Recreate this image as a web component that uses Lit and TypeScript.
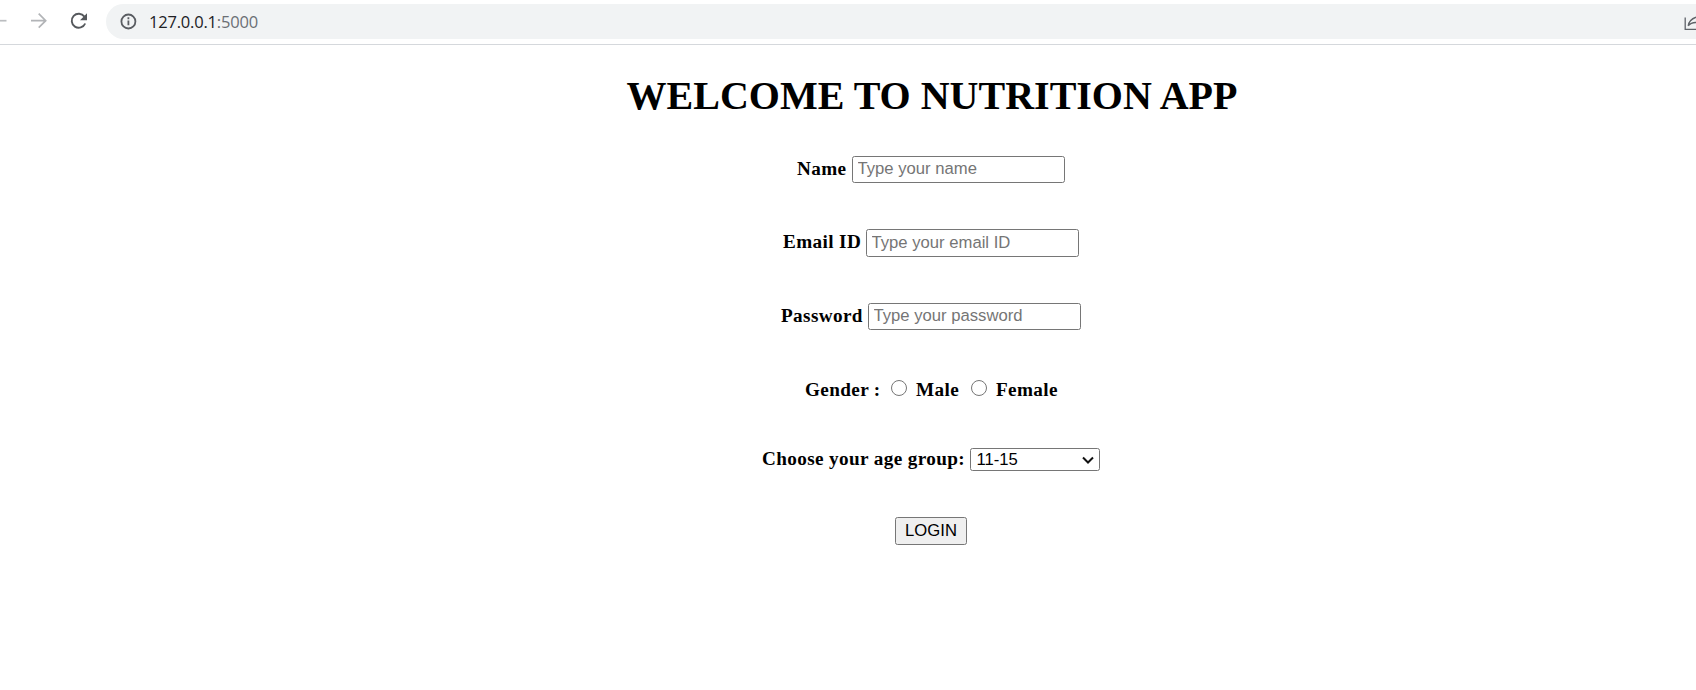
import { LitElement, html, css } from "lit";
import { customElement } from "lit/decorators.js";

@customElement("browser-bar")
class BrowserBar extends LitElement {
  static styles = css`
    :host { display: block; height: 44px; border-bottom: 1px solid #d5d8dc; background: #fff; box-sizing: content-box; }
    .bar { display: flex; height: 44px; }
    .nav { width: 106px; height: 44px; flex: none; display: block; }
    .address { flex: 1; display: flex; align-items: center; height: 35px; margin-top: 4px; background: #f1f3f4; border-radius: 18px 0 0 18px; overflow: hidden; }
    .info { width: 43px; height: 35px; flex: none; }
    .url { flex: 1; font: 16.5px/35px "Open Sans", sans-serif; letter-spacing: -0.2px; color: #202124; white-space: nowrap; }
    .port { color: #6b6f74; }
    .share { width: 12px; height: 35px; flex: none; }
  `;
  render() {
    return html`<div class="bar">
      <svg class="nav" viewBox="0 0 106 44" fill="none" stroke-width="1.7">
        <path d="M0 20.7H6.5" stroke="#bbbdc0" />
        <path d="M31 20.7H45.5M38.7 13.7L45.7 20.7L38.7 27.7" stroke="#b2b4b7" />
        <path d="M84.4 16.6A7 7 0 1 0 85.2 23.5" stroke="#55585c" stroke-width="1.9" />
        <path d="M87 13.2V20.2H80Z" fill="#55585c" />
      </svg>
      <div class="address">
        <svg class="info" viewBox="0 0 43 35" fill="none" stroke="#5a5d62">
          <circle cx="22.4" cy="17.5" r="7" stroke-width="1.8" />
          <path d="M22.4 16.5V21.3M22.4 13.3V15.2" stroke-width="1.8" />
        </svg>
        <div class="url">127.0.0.1<span class="port">:5000</span></div>
        <svg class="share" viewBox="0 0 12 35" fill="none" stroke="#5f6368" stroke-width="1.3">
          <path d="M1.2 13.5V25.4H12M4.2 21.8C4.8 17.2 7.6 14.8 12 13.2M4.2 21.8C6.3 19.2 8.7 18.4 12 18.5" />
        </svg>
      </div>
    </div>`;
  }
}

@customElement("app-root")
class AppRoot extends LitElement {
  static styles = css`
    :host { display: block; width: 100%; height: 690px; overflow: hidden; background: #fff; color: #000; font-family: "Liberation Serif", serif; }
    .page { width: 1862px; display: flex; flex-direction: column; align-items: center; }
    h1 { margin: 28px 0 0 2px; height: 46px; font-size: 40px; line-height: 46px; font-weight: 700; white-space: nowrap; }
    .row { display: flex; font-size: 19.2px; letter-spacing: 0.37px; font-weight: 700; line-height: 25px; height: 27px; white-space: nowrap; }
    .name { margin-top: 37px; }
    .email { margin-top: 46px; }
    .email .field { height: 28px; }
    .password { margin-top: 47px; }
    .gender { margin-top: 47px; height: 27px; }
    .age { margin-top: 42px; }
    .login { margin-top: 44px; height: 28px; }
    .label { flex: none; }
    .name .label { width: 55px; }
    .email .label { width: 83px; }
    .password .label { width: 87px; }
    .gender .label { width: 86px; }
    .male { width: 55px; }
    .female { width: 61px; }
    .age .label { width: 208px; }
    input, select, button { box-sizing: border-box; margin: 0; font: 16.67px "Liberation Sans", sans-serif; letter-spacing: normal; border: 1px solid #767676; border-radius: 2.5px; outline: none; }
    .field { width: 213px; height: 27px; padding: 0 4.5px 1px; background: #fff; }
    .field::placeholder { color: #757575; opacity: 1; }
    .radio { appearance: none; flex: none; width: 16px; height: 16px; border-radius: 50%; margin: 3px 9px 0 0; background: #fff; }
    .select { display: grid; width: 130px; height: 23px; margin-top: 2px; }
    .select > * { grid-area: 1 / 1; }
    select { appearance: none; width: 130px; height: 23px; padding: 0 5.5px; background: #fff; color: #000; }
    .chevron { width: 12px; height: 9px; justify-self: end; align-self: center; margin: 1px 6px 0 0; pointer-events: none; }
    button { width: 72px; height: 28px; padding: 0 0 1px; background: #efefef; color: #000; }
  `;
  render() {
    return html`<browser-bar></browser-bar>
      <main class="page">
        <h1>WELCOME TO NUTRITION APP</h1>
        <div class="row name"><label class="label">Name</label><input class="field" placeholder="Type your name" /></div>
        <div class="row email"><label class="label">Email ID</label><input class="field" placeholder="Type your email ID" /></div>
        <div class="row password"><label class="label">Password</label><input class="field" type="password" placeholder="Type your password" /></div>
        <div class="row gender">
          <span class="label">Gender :</span><input class="radio" type="radio" name="gender" /><label class="male">Male</label><input class="radio" type="radio" name="gender" /><label class="female">Female</label>
        </div>
        <div class="row age">
          <label class="label">Choose your age group:</label>
          <div class="select">
            <select><option>11-15</option></select>
            <svg class="chevron" viewBox="0 0 12 9"><path d="M1 1.5L6 6.5L11 1.5" fill="none" stroke="#111" stroke-width="2" /></svg>
          </div>
        </div>
        <div class="row login"><button>LOGIN</button></div>
      </main>`;
  }
}
